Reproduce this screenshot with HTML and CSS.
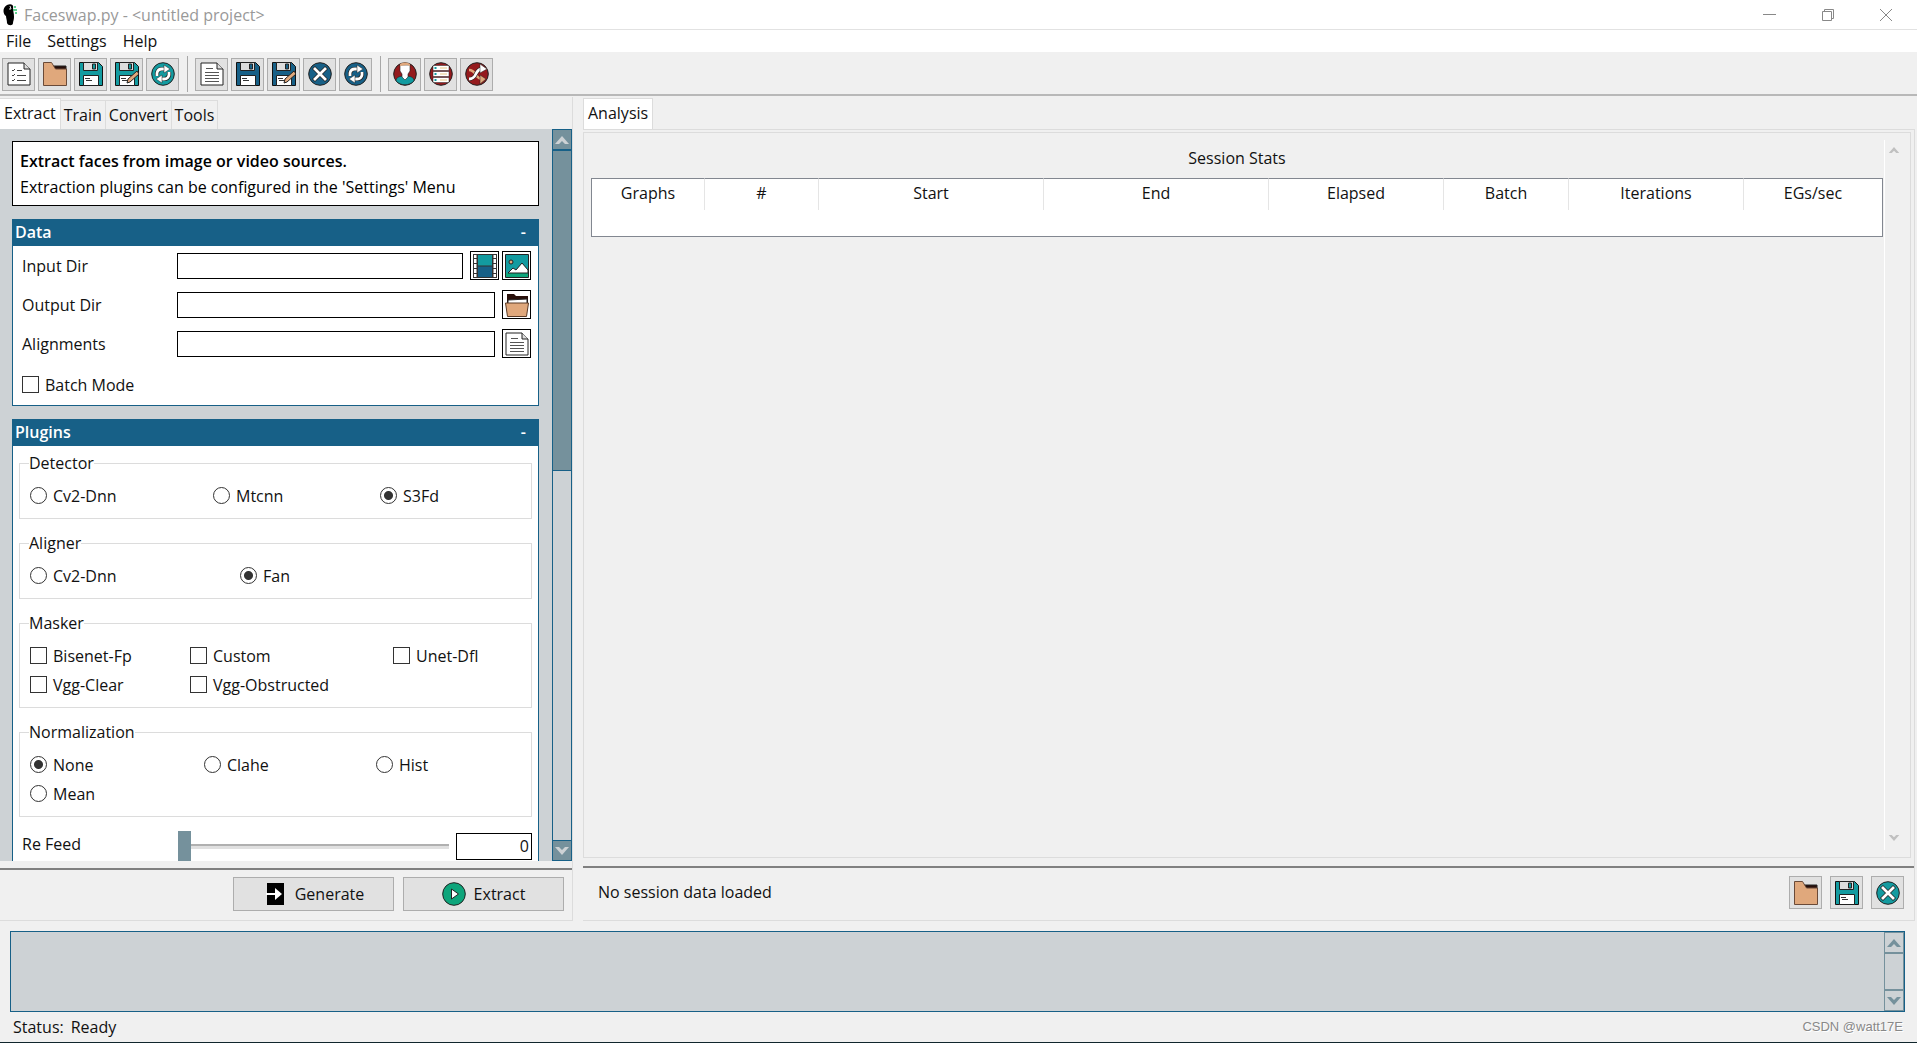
FILE: index.html
```html
<!DOCTYPE html>
<html lang="en">
<head>
<meta charset="utf-8">
<title>Faceswap.py - &lt;untitled project&gt;</title>
<link rel="stylesheet" href="styles.css">
</head>
<body>
<svg class="defs" aria-hidden="true">
  <symbol id="i-list" viewBox="0 0 24 24"><path d="M1 1h16l6 6v16H1z" fill="#fff" stroke="#222"/><path d="M17 1v6h6" fill="#ddd" stroke="#222"/><path d="M10 8.500h5M10 13.500h9M10 18.500h9M5 8l1 1 2-2M5 13l1 1 2-2M5 18l1 1 2-2" fill="none" stroke="#444"/></symbol>
  <symbol id="i-doc" viewBox="0 0 24 24"><path d="M1 1h16l6 6v16H1z" fill="#fff" stroke="#222"/><path d="M17 1v6h6" fill="#ddd" stroke="#222"/><path d="M6 6.500h7M5 10.500h14M5 13.500h14M5 16.500h14M5 19.500h14" stroke="#555"/></symbol>
  <symbol id="i-folder" viewBox="0 0 24 24"><path d="M8 4h15v6H8z" fill="#280f0a" stroke="#222"/><path d="M.5.5h8l4 6.500h11v16.500H.5z" fill="#e0a87c" stroke="#6a4a38"/></symbol>
  <symbol id="i-open" viewBox="0 0 24 24"><path d="M2 1h7l2 2h12v9H2z" fill="#280f0a"/><path d="M3 7l19-1v5H3z" fill="#fff" stroke="#222"/><path d="M.5 10h23l-2 13.500h-19z" fill="#e0a87c" stroke="#5a3a26"/></symbol>
  <symbol id="i-save" viewBox="0 0 24 24"><path d="M.5.5h19l4 4v19H.5z" fill="currentColor" stroke="#111"/><path d="M4.500.5h14v8h-14z" fill="#ddd" stroke="#222"/><path d="M13.500 2h3v5h-3z" fill="currentColor" stroke="#222"/><path d="M4.500 13.500h15v10h-15z" fill="#fff" stroke="#222"/><path d="M6 16.500h5M7 18.500h6" stroke="#333"/></symbol>
  <symbol id="i-saveas" viewBox="0 0 24 24"><use href="#i-save"/><path d="M12 21l1-4 9-8 2 3-9 8z" fill="#e0a87c" stroke="#222"/></symbol>
  <symbol id="i-reload" viewBox="0 0 24 24"><circle cx="12" cy="12" r="11.300" fill="currentColor" stroke="#222"/><path d="M6 14V11a5 5 0 0 1 5-4h3M18 10v3a5 5 0 0 1-5 4h-3" fill="none" stroke="#222" stroke-width="4.200"/><path d="M6 14V11a5 5 0 0 1 5-4h3M18 10v3a5 5 0 0 1-5 4h-3" fill="none" stroke="#fff" stroke-width="2.800"/><path d="M13 3l6 4-6 4zM11 13l-6 4 6 4z" fill="#fff" stroke="#222" stroke-width=".5"/></symbol>
  <symbol id="i-clear" viewBox="0 0 24 24"><circle cx="12" cy="12" r="11.300" fill="currentColor" stroke="#222"/><path d="M5.500 5.500l13 13M18.500 5.500l-13 13" stroke="#222" stroke-width="4.200"/><path d="M6 6l12 12M18 6L6 18" stroke="#fff" stroke-width="2.800"/></symbol>
  <symbol id="i-face" viewBox="0 0 24 24"><circle cx="12" cy="12" r="11.300" fill="#951a1d" stroke="#222"/><path d="M3 19c0-4 4-5 9-5s9 1 9 5c-5 5-13 5-18 0z" fill="#139ba0" stroke="#222" stroke-width=".6"/><path d="M7 3h10v6l-2 3v3l-3 3-3-3v-3L7 9z" fill="#fff" stroke="#222" stroke-width=".6"/><path d="M7 4V2c3-2 7-2 10 0v2l-3-1z" fill="#e0a87c"/></symbol>
  <symbol id="i-table" viewBox="0 0 24 24"><circle cx="12" cy="12" r="11.300" fill="#951a1d" stroke="#222"/><path d="M4 3.500h16V8.500H4zM4 9.500h16v5H4zM4 15.500h16v5H4z" fill="#fff" stroke="#222" stroke-width=".5"/><path d="M5.500 6h2M5.500 12h2M5.500 18h2" stroke="#139ba0" stroke-width="2"/><path d="M11 6h7M11 12h7M11 18h7" stroke="#f3e3c0" stroke-width="2"/></symbol>
  <symbol id="i-swap" viewBox="0 0 24 24"><circle cx="12" cy="12" r="11.300" fill="#951a1d" stroke="#222"/><path d="M4 8c8 0 5 9 14 9" fill="none" stroke="#e0a87c" stroke-width="2.500"/><path d="M15 13l6 4-6 5z" fill="#e0a87c" stroke="#222" stroke-width=".5"/><path d="M4 17c9 0 5-10 13-10" fill="none" stroke="#222" stroke-width="4"/><path d="M4 17c9 0 5-10 13-10" fill="none" stroke="#fff" stroke-width="2.800"/><path d="M15 2l7 5-7 4z" fill="#fff" stroke="#222" stroke-width=".5"/></symbol>
  <symbol id="i-film" viewBox="0 0 24 24"><path d="M0 0h24v24H0z" fill="#333"/><path d="M5 1h14v10.500H5z" fill="#139ba0"/><path d="M5 12.500h14V23H5z" fill="#176087"/><path d="M1 1h2.500v3H1zM1 5h2.500v4H1zM1 10h2.500v4H1zM1 15h2.500v4H1zM1 20h2.500v3H1zM20.500 1H23v3h-2.500zM20.500 5H23v4h-2.500zM20.500 10H23v4h-2.500zM20.500 15H23v4h-2.500zM20.500 20H23v3h-2.500z" fill="#fff"/></symbol>
  <symbol id="i-image" viewBox="0 0 24 24"><path d="M.5.5h23v23H.5z" fill="#139ba0" stroke="#222"/><path d="M1 19h22v4H1z" fill="#0ea57b"/><circle cx="6" cy="8" r="2" fill="#e0a87c" stroke="#222"/><path d="M3 19l5-5 3 2 6-7 6 7v3z" fill="#fff" stroke="#222"/></symbol>
  <symbol id="i-generate" viewBox="0 0 24 24"><path d="M4 1h17v22H4z" fill="#000"/><path d="M3 12h10" stroke="#fff" stroke-width="2"/><path d="M12 6l7 6-7 6z" fill="#fff"/></symbol>
  <symbol id="i-play" viewBox="0 0 24 24"><circle cx="12" cy="12" r="11.300" fill="#0ea57b" stroke="#222"/><path d="M9.500 7v10l7-5z" fill="#fff" stroke="#222"/></symbol>
  <symbol id="i-up" viewBox="0 0 16 10"><path d="M1 9l7-8 7 8h-4L8 6 5 9z" fill="currentColor"/></symbol>
  <symbol id="i-down" viewBox="0 0 16 10"><path d="M1 1l7 8 7-8h-4L8 4 5 1z" fill="currentColor"/></symbol>
</svg>

<header class="titlebar">
  <svg class="logo" viewBox="0 0 16 22"><path d="M5 1c4-2 7 0 6 3 0 3 1 5 1 9 0 3-1 4-1 6 0 3-5 3-6 0 0-3-1-5-1-7C1 10 0 4 5 1z" fill="#000"/><path d="M8 2l1 3M7 5h2" stroke="#ddd"/><path d="M12 3h2M11 6h4M13 9h2" stroke="#2fc46d" stroke-width="1.500"/></svg>
  <h1>Faceswap.py - &lt;untitled project&gt;</h1>
  <div class="wincontrols">
    <button aria-label="Minimize"><svg viewBox="0 0 14 14"><path d="M0 6.500h13"/></svg></button>
    <button aria-label="Restore"><svg viewBox="0 0 14 14"><path d="M1.500 3.500h9v9h-9zM3.500 3V1.500h9v9H11"/></svg></button>
    <button aria-label="Close"><svg viewBox="0 0 14 14"><path d="M1 1l12 12M13 1L1 13"/></svg></button>
  </div>
</header>
<nav class="menu"><button>File</button><button>Settings</button><button>Help</button></nav>

<div class="toolbar">
  <button class="tool teal" aria-label="New project"><svg><use href="#i-list"/></svg></button>
  <button class="tool teal" aria-label="Open project"><svg><use href="#i-folder"/></svg></button>
  <button class="tool teal" aria-label="Save project"><svg><use href="#i-save"/></svg></button>
  <button class="tool teal" aria-label="Save project as"><svg><use href="#i-saveas"/></svg></button>
  <button class="tool teal" aria-label="Reload project"><svg><use href="#i-reload"/></svg></button>
  <span class="sep"></span>
  <button class="tool blue" aria-label="Load task"><svg><use href="#i-doc"/></svg></button>
  <button class="tool blue" aria-label="Save task"><svg><use href="#i-save"/></svg></button>
  <button class="tool blue" aria-label="Save task as"><svg><use href="#i-saveas"/></svg></button>
  <button class="tool blue" aria-label="Clear task"><svg><use href="#i-clear"/></svg></button>
  <button class="tool blue" aria-label="Reload task"><svg><use href="#i-reload"/></svg></button>
  <span class="sep"></span>
  <button class="tool" aria-label="Extract settings"><svg><use href="#i-face"/></svg></button>
  <button class="tool" aria-label="Train settings"><svg><use href="#i-table"/></svg></button>
  <button class="tool" aria-label="Convert settings"><svg><use href="#i-swap"/></svg></button>
</div>

<main class="work">
  <section class="left">
    <div class="tabs"><button class="tab on">Extract</button><button class="tab">Train</button><button class="tab">Convert</button><button class="tab">Tools</button></div>
    <div class="pane">
      <form class="options">
        <div class="info"><strong>Extract faces from image or video sources.</strong><p>Extraction plugins can be configured in the 'Settings' Menu</p></div>

        <section class="card">
          <h2>Data<button type="button" class="fold">-</button></h2>
          <div class="rows">
            <div class="row"><label for="in">Input Dir</label><input id="in" type="text"><button type="button" class="pick" aria-label="Pick video"><svg><use href="#i-film"/></svg></button><button type="button" class="pick" aria-label="Pick images"><svg><use href="#i-image"/></svg></button></div>
            <div class="row"><label for="out">Output Dir</label><input id="out" type="text"><button type="button" class="pick" aria-label="Pick folder"><svg><use href="#i-open"/></svg></button></div>
            <div class="row"><label for="al">Alignments</label><input id="al" type="text"><button type="button" class="pick" aria-label="Pick file"><svg><use href="#i-doc"/></svg></button></div>
            <label class="opt batch"><input type="checkbox">Batch Mode</label>
          </div>
        </section>

        <section class="card">
          <h2>Plugins<button type="button" class="fold">-</button></h2>
          <div class="groups">
            <fieldset><legend>Detector</legend><div class="choices detector">
              <label class="opt"><input type="radio" name="det">Cv2-Dnn</label><label class="opt"><input type="radio" name="det">Mtcnn</label><label class="opt"><input type="radio" name="det" checked>S3Fd</label></div></fieldset>
            <fieldset><legend>Aligner</legend><div class="choices aligner">
              <label class="opt"><input type="radio" name="ali">Cv2-Dnn</label><label class="opt"><input type="radio" name="ali" checked>Fan</label></div></fieldset>
            <fieldset><legend>Masker</legend><div class="choices masker">
              <label class="opt"><input type="checkbox">Bisenet-Fp</label><label class="opt"><input type="checkbox">Custom</label><label class="opt"><input type="checkbox">Unet-Dfl</label><label class="opt"><input type="checkbox">Vgg-Clear</label><label class="opt"><input type="checkbox">Vgg-Obstructed</label></div></fieldset>
            <fieldset><legend>Normalization</legend><div class="choices norm">
              <label class="opt"><input type="radio" name="nor" checked>None</label><label class="opt"><input type="radio" name="nor">Clahe</label><label class="opt"><input type="radio" name="nor">Hist</label><label class="opt"><input type="radio" name="nor">Mean</label></div></fieldset>
            <div class="feed"><label for="feed">Re Feed</label><input id="feed" type="range" min="0" max="10" value="0"><input class="num" type="text" value="0" aria-label="Re Feed value"></div>
          </div>
        </section>
      </form>
      <div class="scroll solid"><span class="arrow"><svg><use href="#i-up"/></svg></span><span class="thumb"></span><span class="trough"></span><span class="arrow"><svg><use href="#i-down"/></svg></span></div>
    </div>
    <div class="actions"><button class="action"><svg><use href="#i-generate"/></svg>Generate</button><button class="action"><svg><use href="#i-play"/></svg>Extract</button></div>
  </section>

  <section class="right">
    <div class="tabs"><button class="tab on">Analysis</button></div>
    <div class="display">
      <div class="stats">
        <div class="statsbody">
          <table>
            <caption>Session Stats</caption>
            <colgroup><col class="c-s"><col class="c-s"><col class="c-l"><col class="c-l"><col class="c-m"><col class="c-b"><col class="c-m"><col></colgroup>
            <thead><tr><th>Graphs</th><th>#</th><th>Start</th><th>End</th><th>Elapsed</th><th>Batch</th><th>Iterations</th><th>EGs/sec</th></tr></thead>
            <tbody><tr><td colspan="8"></td></tr></tbody>
          </table>
        </div>
        <div class="ghost"><svg><use href="#i-up"/></svg><svg><use href="#i-down"/></svg></div>
      </div>
      <div class="session"><span>No session data loaded</span>
        <button class="tool teal" aria-label="Load session"><svg><use href="#i-folder"/></svg></button>
        <button class="tool teal" aria-label="Save session"><svg><use href="#i-save"/></svg></button>
        <button class="tool teal" aria-label="Clear session"><svg><use href="#i-clear"/></svg></button></div>
    </div>
  </section>
</main>

<section class="console">
  <div class="scroll"><span class="arrow"><svg><use href="#i-up"/></svg></span><span class="trough"></span><span class="arrow"><svg><use href="#i-down"/></svg></span></div>
</section>
<footer><span>Status:</span><span>Ready</span><small>CSDN @watt17E</small></footer>
</body>
</html>
```
FILE: styles.css
```css
* { box-sizing: border-box; }
html { height: 100%; }
body {
  margin: 0; height: 100%; display: flex; flex-direction: column; overflow: hidden;
  background: #f0f0f0; color: #111; border-bottom: 1px solid #10262c;
  font: 16px/20px "Open Sans", "Noto Sans", sans-serif;
}
button, input { font: inherit; color: inherit; margin: 0; }
button { padding: 0; border: 0; background: none; }
svg { display: block; }
.defs { position: absolute; width: 0; height: 0; }

.titlebar { height: 30px; flex: none; display: flex; align-items: center; padding-right: 2px; background: #fff; border-bottom: 1px solid #e2e2e2; }
.logo { width: 16px; height: 22px; margin: 0 6px 0 2px; }
h1 { margin: 0; flex: 1; font-size: 16px; font-weight: 400; color: #999; }
.wincontrols { display: flex; }
.wincontrols button { width: 58px; display: flex; justify-content: center; }
.wincontrols svg { width: 14px; height: 14px; fill: none; stroke: #888; }

.menu { height: 22px; flex: none; display: flex; align-items: center; gap: 16px; padding-left: 6px; background: #fff; }

.toolbar { height: 44px; flex: none; display: flex; align-items: center; gap: 3px; padding: 2px 2px 0; border-bottom: 2px solid #b8b8b8; }
.tool { width: 33px; height: 33px; display: grid; place-items: center; background: #e1e1e1; border: 1px solid #adadad; }
.tool svg { width: 24px; height: 24px; }
.teal { color: #139ba0; }
.blue { color: #176087; }
.sep { width: 1px; height: 36px; margin: 0 4px 0 5px; background: #a8a8a8; }

.work { flex: 1; min-height: 0; display: flex; gap: 10px; padding: 1px 2px 0 0; }
.left { width: 573px; flex: none; display: flex; flex-direction: column; border-right: 1px solid #dcdcdc; border-bottom: 1px solid #dcdcdc; }
.tabs { height: 32px; flex: none; display: flex; align-items: flex-end; }
.tab { height: 29px; padding: 0 3px; border: 1px solid #dcdcdc; border-width: 1px 1px 0 0; }
.tab.on { height: 31px; padding: 0 4px 2px; background: #fff; }

.pane { flex: 1; min-height: 0; display: flex; background: #cdd2d5; }
.options { flex: 1; overflow: hidden; padding: 12px 13px 0 12px; display: flex; flex-direction: column; gap: 13px; }
.info { flex: none; height: 65px; padding: 6px 7px; border: 1px solid #000; background: #fff; color: #000; }
.info strong { display: block; line-height: 26px; font-weight: 600; }
.info p { margin: 0; line-height: 26px; }
.card { flex: none; border: 1px solid #176087; background: #fff; }
.card h2 { height: 26px; margin: 0; padding: 0 12px 3px 2px; display: flex; align-items: center; justify-content: space-between; background: #176087; color: #fff; font-size: 16px; font-weight: 600; }
.rows { padding: 5px 7px 6px 9px; }
.row { height: 29px; margin-bottom: 10px; display: flex; align-items: center; gap: 3px; }
.row label { width: 152px; flex: none; }
.row input { flex: 1; min-width: 0; height: 26px; margin-right: 4px; padding: 0 4px; border: 1px solid #000; background: #fff; }
.pick { width: 29px; height: 29px; flex: none; display: grid; place-items: center; border: 1px solid #000; background: #fff; }
.pick svg { width: 24px; height: 24px; }
.opt { display: flex; align-items: center; gap: 6px; height: 29px; white-space: nowrap; }
.batch { margin-top: 12px; }
.opt input { appearance: none; width: 17px; height: 17px; flex: none; border: 1px solid #333; background: #fff; }
.opt input[type="radio"] { border-radius: 50%; }
.opt input[type="radio"]:checked { background: radial-gradient(circle, #333 4px, #fff 5px); }
.groups { padding: 7px 6px 0; }
fieldset { margin: 0 0 14px; padding: 8px 10px; border: 1px solid #dcdcdc; min-width: 0; }
legend { margin-left: -1px; padding: 0; line-height: 20px; }
.choices { display: grid; }
.detector { grid-template-columns: 183px 167px auto; }
.aligner { grid-template-columns: 210px auto; }
.masker { grid-template-columns: 160px 203px auto; }
.norm { grid-template-columns: 174px 172px auto; }
.feed { display: flex; align-items: center; height: 30px; }
.feed label { width: 159px; padding: 0 0 4px 3px; }
.feed input[type="range"] { appearance: none; flex: 1; min-width: 0; height: 30px; background: none; }
.feed input::-webkit-slider-runnable-track { height: 5px; background: #e0e0e0; border-top: 2px solid #b0b0b0; }
.feed input::-webkit-slider-thumb { appearance: none; width: 13px; height: 30px; margin-top: -15px; background: #75919c; }
.feed .num { width: 76px; height: 27px; margin-left: 7px; padding: 0 2px; border: 1px solid #000; text-align: right; }

.scroll { width: 20px; flex: none; display: flex; flex-direction: column; border: 1px solid #176087; color: #75919c; }
.arrow { height: 19px; flex: none; display: grid; place-items: center; }
.arrow svg { width: 16px; height: 10px; }
.trough { flex: 1; border: 1px solid #75919c; border-width: 2px 0; }
.solid .arrow { background: #75919c; color: #cdd2d5; }
.solid .thumb { height: 322px; background: #75919c; border: 1px solid #176087; border-width: 2px 0 1px; }
.solid .trough { border: 0; border-bottom: 1px solid #176087; }

.actions { height: 52px; flex: none; display: flex; justify-content: flex-end; gap: 9px; padding: 7px 8px 0; margin-top: 7px; border-top: 2px solid #808080; }
.action { width: 161px; height: 34px; display: flex; align-items: center; justify-content: center; gap: 8px; background: #e1e1e1; border: 1px solid #adadad; }
.action svg { width: 24px; height: 24px; }

.right { flex: 1; min-width: 0; display: flex; flex-direction: column; }
.right .tab { border-left-width: 1px; }
.display { flex: 1; min-height: 0; display: flex; flex-direction: column; border: 1px solid #dcdcdc; border-left-width: 0; }
.stats { flex: 1; min-height: 0; display: flex; margin: 2px 3px 0 0; border: 1px solid #dcdcdc; }
.statsbody { flex: 1; padding: 7px 1px 7px 7px; }
table { width: 100%; table-layout: fixed; border-collapse: separate; border-spacing: 0; }
caption { height: 38px; line-height: 36px; }
thead, tbody { background: #fff; }
th { height: 32px; padding: 0 0 4px; font-weight: 400; border-top: 1px solid #828790; border-right: 1px solid #e5e5e5; }
th:first-child, td { border-left: 1px solid #828790; }
th:last-child { border-right-color: #828790; }
td { height: 27px; border-right: 1px solid #828790; border-bottom: 1px solid #828790; }
.c-s { width: 114px; } .c-l { width: 225px; } .c-m { width: 175px; } .c-b { width: 125px; }
.ghost { width: 26px; margin: 7px 0; padding: 6px 8px 8px 0; display: flex; flex-direction: column; justify-content: space-between; align-items: center; border-left: 1px solid #fff; color: #c0c0c0; }
.ghost svg { width: 12px; height: 8px; }
.session { height: 54px; flex: none; display: flex; gap: 8px; margin-top: 8px; padding: 8px 10px 0 15px; border-top: 2px solid #808080; }
.session span { flex: 1; line-height: 33px; }

.console { height: 81px; flex: none; margin: 10px 12px 0 10px; display: flex; justify-content: flex-end; border: 1px solid #176087; background: #cdd2d5; }
.console .scroll { border-color: #75919c; }
footer { height: 30px; flex: none; display: flex; align-items: center; gap: 7px; padding: 0 14px 1px 13px; }
footer small { margin-left: auto; font: 13px "Liberation Sans", sans-serif; color: #888; text-shadow: 1px 1px #fff; }
```
